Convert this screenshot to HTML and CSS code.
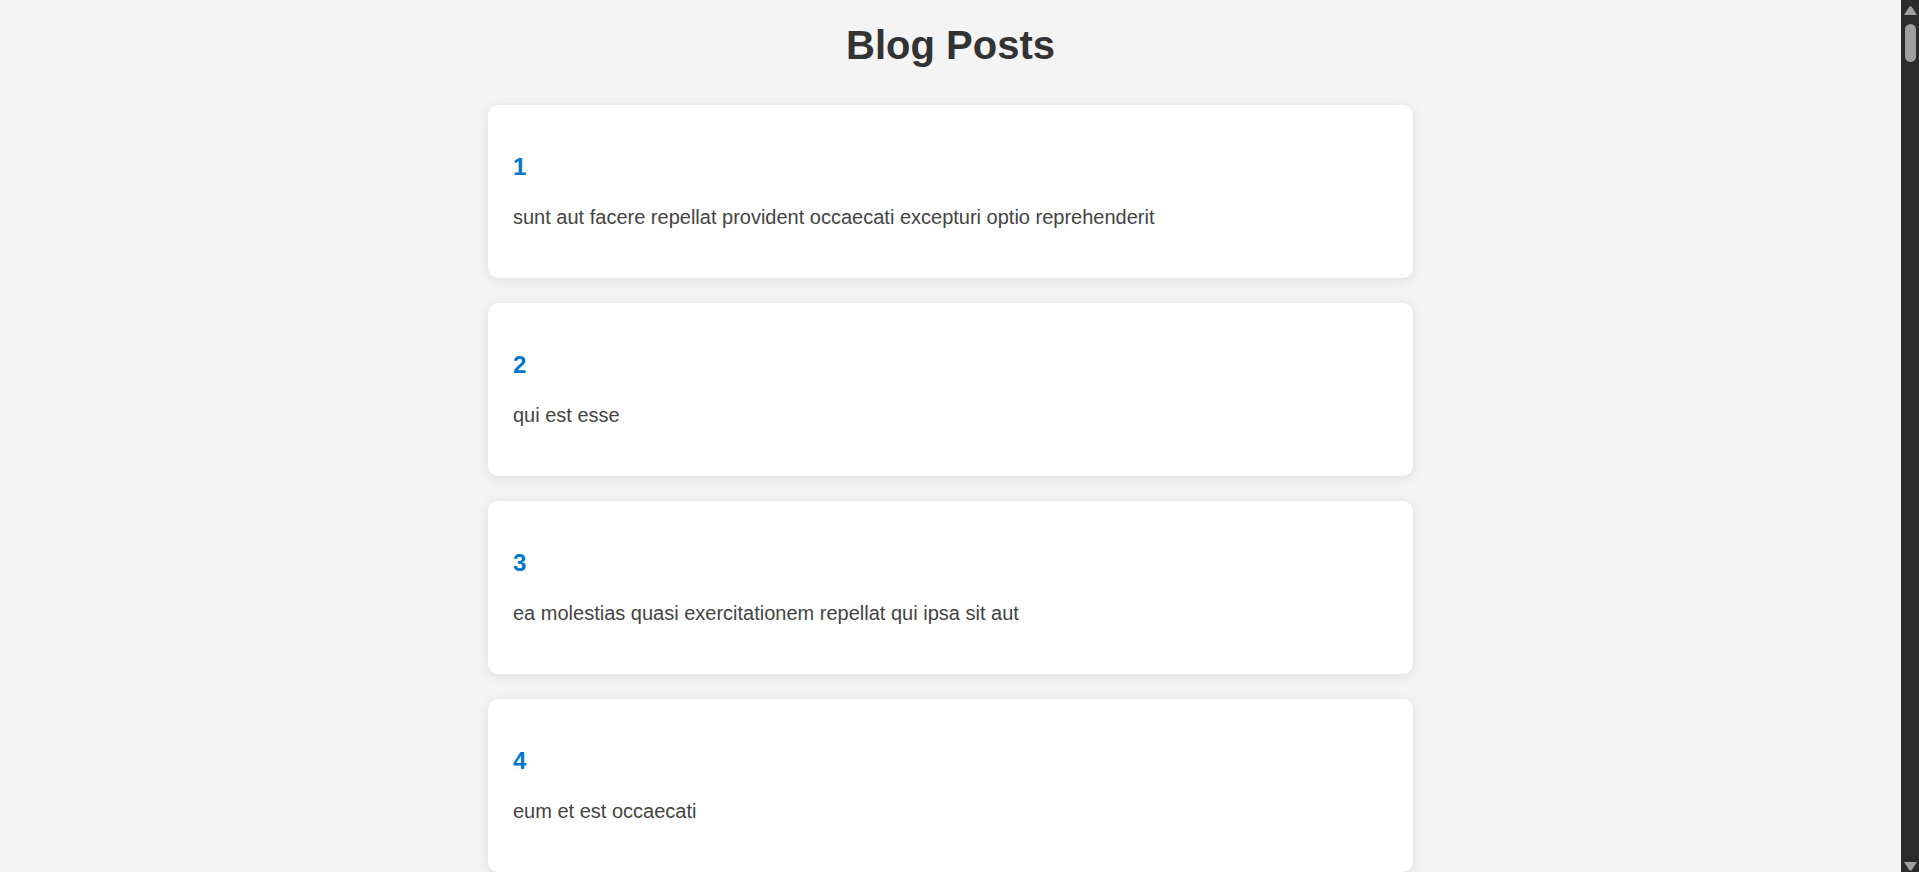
FILE: index.html
```html
<!DOCTYPE html>
<html lang="en">
<head>
<meta charset="utf-8">
<title>Blog Posts</title>
<link rel="stylesheet" href="styles.css">
</head>
<body>
<div class="window">
  <main class="page">
    <h1 class="page-title">Blog Posts</h1>
    <div class="post-list">
      <div class="post"><h2 class="post-id">1</h2><p class="post-title">sunt aut facere repellat provident occaecati excepturi optio reprehenderit</p></div>
      <div class="post"><h2 class="post-id">2</h2><p class="post-title">qui est esse</p></div>
      <div class="post"><h2 class="post-id">3</h2><p class="post-title">ea molestias quasi exercitationem repellat qui ipsa sit aut</p></div>
      <div class="post"><h2 class="post-id">4</h2><p class="post-title">eum et est occaecati</p></div>
    </div>
  </main>
  <div class="scrollbar" aria-hidden="true">
    <div class="sb-btn sb-up">
      <svg width="13" height="9" viewBox="0 0 13 9"><polygon points="5.5,0.5 7.5,0.5 13,9 0,9" fill="#a0a0a0"/></svg>
    </div>
    <div class="sb-track"><div class="sb-thumb"></div></div>
    <div class="sb-btn sb-down">
      <svg width="13" height="9" viewBox="0 0 13 9"><polygon points="0,0 13,0 7.5,8.5 5.5,8.5" fill="#a0a0a0"/></svg>
    </div>
  </div>
</div>
</body>
</html>
```
FILE: styles.css
```css
html, body {
  margin: 0;
  padding: 0;
  height: 100%;
  overflow: hidden;
}

body {
  background: #f4f4f4;
  font-family: "Liberation Sans", Arial, sans-serif;
  color: #333;
}

.window {
  display: flex;
  height: 100vh;
}

.page {
  flex: 1;
  min-width: 0;
  overflow: hidden;
}

.page-title {
  margin: 23px 0 37px;
  text-align: center;
  font-size: 40px;
  font-weight: bold;
  color: #333;
  line-height: normal;
}

.post-list {
  display: flex;
  flex-direction: column;
  gap: 25px;
  max-width: 925px;
  margin: 0 auto;
}

.post {
  background: #fff;
  border-radius: 10px;
  padding: 25px;
  box-shadow: 0 2px 12px rgba(0, 0, 0, 0.1);
}

.post-id {
  margin: 23px 0 25px;
  font-size: 24px;
  font-weight: bold;
  color: #0077cc;
  line-height: normal;
}

.post-title {
  margin: 0 0 24px;
  font-size: 20px;
  color: #444;
  line-height: normal;
}

/* browser scrollbar */
.scrollbar {
  width: 18px;
  flex: none;
  background: #2b2b2b;
  display: flex;
  flex-direction: column;
}

.sb-btn {
  height: 21px;
  box-sizing: border-box;
  display: flex;
  justify-content: center;
  padding-left: 1px;
}

.sb-btn svg {
  display: block;
}

.sb-up {
  align-items: flex-start;
  padding-top: 6px;
}

.sb-down {
  align-items: flex-end;
  padding-bottom: 1px;
}

.sb-track {
  flex: 1;
}

.sb-thumb {
  width: 11px;
  height: 38px;
  margin: 3px 0 0 4px;
  border-radius: 6px;
  background: #9f9f9f;
}
```
